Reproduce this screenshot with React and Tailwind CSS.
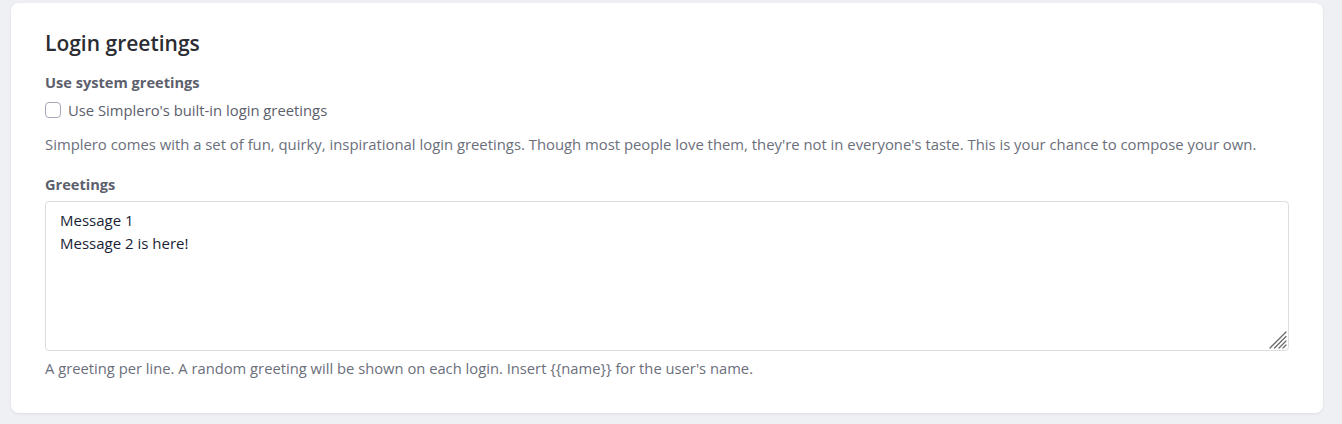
import { useState } from 'react';

export default function App() {
    const [useSystem, setUseSystem] = useState(false);
    const [greetings, setGreetings] = useState('Message 1\nMessage 2 is here!');

    return (
        <div className="min-h-[424px] bg-[#eef0f4] pt-[3px] pl-[11px]" style={{ fontFamily: '"Open Sans", sans-serif' }}>
            <div className="w-[1312px] h-[410px] rounded-lg bg-white shadow-[0_1px_3px_rgba(0,0,0,0.08)] px-[34px] pt-[27px]">
                <h2 className="text-[21px] leading-[27px] font-semibold text-[#2b2d33]">Login greetings</h2>

                <div className="mt-[16px] text-[14.6px] leading-[18px] font-bold text-[#5c606c]">Use system greetings</div>
                <label className="mt-[9px] flex items-center gap-[7px] text-[14.8px] leading-[20px] text-[#5c606c]">
                    <input
                        type="checkbox"
                        checked={useSystem}
                        onChange={e => setUseSystem(e.target.checked)}
                        className="appearance-none w-4 h-4 rounded-[4px] border border-[#a5a8b8] bg-white checked:bg-[#3b82f6]"
                    />
                    Use Simplero's built-in login greetings
                </label>

                <p className="mt-[14px] text-[14.85px] leading-[20px] text-[#6b6f7b]">
                    Simplero comes with a set of fun, quirky, inspirational login greetings. Though most people love them, they're not in everyone's taste. This is your chance to compose your own.
                </p>

                <div className="mt-[21px] text-[14.6px] leading-[18px] font-bold text-[#5c606c]">Greetings</div>
                <div className="relative mt-[8px] w-[1244px]">
                    <textarea
                        value={greetings}
                        onChange={e => setGreetings(e.target.value)}
                        className="block w-full h-[150px] resize-none rounded-[4px] border border-[#dcdde3] px-[14px] py-[7px] text-[15px] leading-[23px] text-[#1a1f36] outline-none"
                    />
                    <svg className="pointer-events-none absolute right-[2px] bottom-[2px]" width="18" height="18" viewBox="0 0 18 18">
                        <g stroke="#6b6b6b" strokeWidth="1.3" strokeLinecap="round">
                            <line x1="1" y1="17" x2="17" y2="1" />
                            <line x1="5.5" y1="17" x2="17" y2="5.5" />
                            <line x1="10" y1="17" x2="17" y2="10" />
                            <line x1="14" y1="17" x2="17" y2="14" />
                        </g>
                    </svg>
                </div>
                <p className="mt-[7px] text-[14.75px] leading-[20px] text-[#6b6f7b]">
                    A greeting per line. A random greeting will be shown on each login. Insert {'{{name}}'} for the user's name.
                </p>
            </div>
        </div>
    );
}
